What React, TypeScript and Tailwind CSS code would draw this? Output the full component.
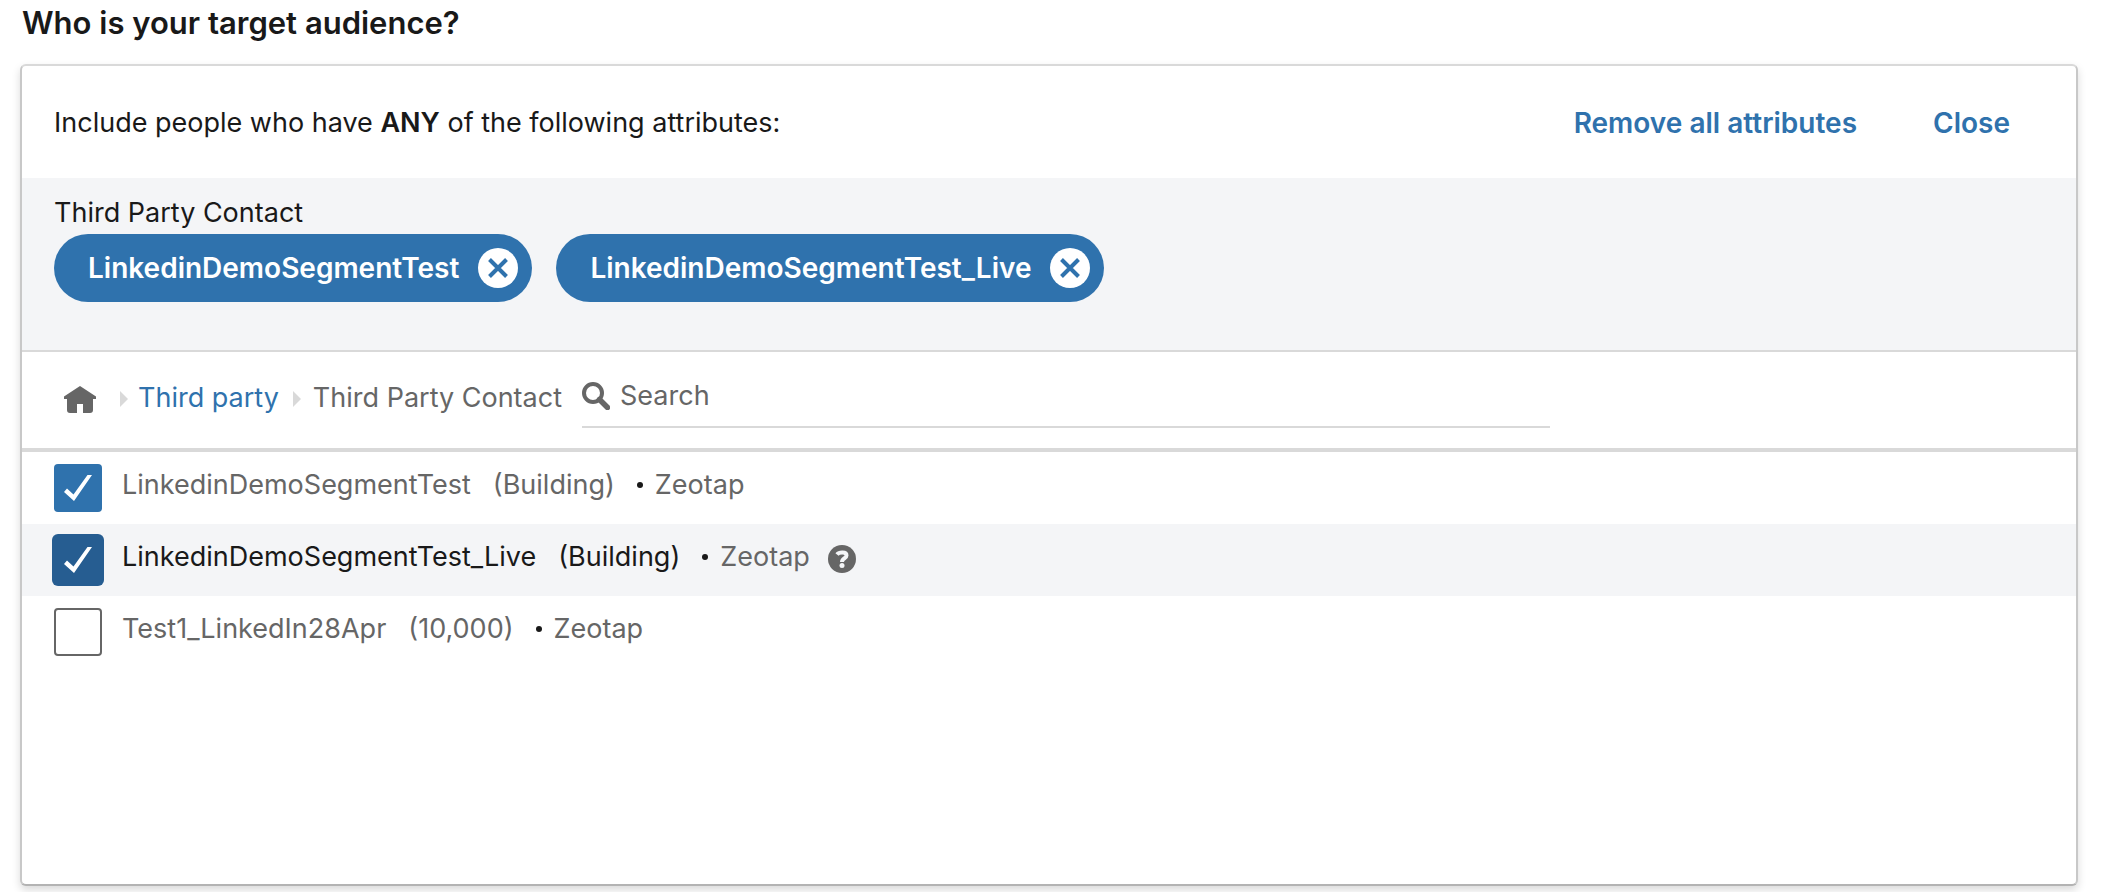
import { useState } from "react";

type Segment = {
  id: string;
  name: string;
  size: string;
  provider: string;
};

const SEGMENTS: Segment[] = [
  { id: "demo", name: "LinkedinDemoSegmentTest", size: "(Building)", provider: "Zeotap" },
  { id: "demo-live", name: "LinkedinDemoSegmentTest_Live", size: "(Building)", provider: "Zeotap" },
  { id: "test1", name: "Test1_LinkedIn28Apr", size: "(10,000)", provider: "Zeotap" },
];

export default function App() {
  const [selected, setSelected] = useState<string[]>(["demo", "demo-live"]);
  const [active, setActive] = useState("demo-live");
  const [query, setQuery] = useState("");

  function toggle(id: string) {
    setSelected((s) => (s.includes(id) ? s.filter((x) => x !== id) : [...s, id]));
  }

  const visible = SEGMENTS.filter((s) => s.name.toLowerCase().includes(query.toLowerCase()));

  return (
    <main className="flex min-h-screen flex-col bg-white pr-6 pb-1.5 pl-5 font-['Inter',sans-serif] text-[27px] leading-9 text-[#191919]">
      <h1 className="pt-[3px] pb-[21px] pl-0.5 text-[31px] leading-10 font-semibold">
        Who is your target audience?
      </h1>

      <section className="flex grow flex-col rounded-md border-2 border-[#c8c8c8] border-t-[#d9d9d9] border-b-[#b3b3b3] bg-white shadow-[0_4px_8px_rgba(0,0,0,0.15)]">
        {/* Header */}
        <div className="flex h-28 items-center justify-between pt-0.5 pr-[66px] pl-8">
          <p>
            Include people who have <strong className="font-semibold">ANY</strong> of the following
            attributes:
          </p>
          <div className="flex gap-19 text-[28px] font-semibold text-[#2f72ad]">
            <button onClick={() => setSelected([])}>Remove all attributes</button>
            <button>Close</button>
          </div>
        </div>

        {/* Selected attributes */}
        <div className="h-[174px] border-b-2 border-[#d9d9d9] bg-[#f4f5f7] px-8 pt-[17px]">
          <h2 className="mb-[3px]">Third Party Contact</h2>
          <div className="flex flex-wrap gap-6">
            {SEGMENTS.filter((s) => selected.includes(s.id)).map((s) => (
              <Chip key={s.id} label={s.name} onRemove={() => toggle(s.id)} />
            ))}
          </div>
        </div>

        {/* Breadcrumb + search */}
        <div className="flex h-25 border-b-4 border-[#d9d9d9] pl-10">
          <nav aria-label="Breadcrumb" className="flex h-23 items-center text-[#666]">
            <a href="#home" aria-label="Home" className="pt-1">
              <HomeIcon />
            </a>
            <Caret className="mt-0.5 mr-[10px] ml-6" />
            <a href="#third-party" className="text-[#2f72ad]">
              Third party
            </a>
            <Caret className="mt-0.5 mr-3 ml-3.5" />
            <span>Third Party Contact</span>
          </nav>
          <div className="mt-4 ml-5 flex h-15 w-[968px] items-start border-b-2 border-[#d9d9d9] pt-2.5">
            <SearchIcon />
            <input
              type="text"
              aria-label="Search"
              placeholder="Search"
              value={query}
              onChange={(e) => setQuery(e.target.value)}
              className="ml-2 h-9 min-w-0 grow px-0.5 outline-none placeholder:text-[#666]"
            />
          </div>
        </div>

        {/* Segments */}
        <ul>
          {visible.map((s) => (
            <SegmentRow
              key={s.id}
              segment={s}
              checked={selected.includes(s.id)}
              active={active === s.id}
              onHover={() => setActive(s.id)}
              onToggle={() => toggle(s.id)}
            />
          ))}
        </ul>
      </section>
    </main>
  );
}

function Chip({ label, onRemove }: { label: string; onRemove: () => void }) {
  return (
    <span className="flex h-17 items-center gap-[19px] rounded-full bg-[#2f72ad] pr-3.5 pl-[34px] text-[28px] font-semibold text-white">
      {label}
      <button aria-label={`Remove ${label}`} onClick={onRemove}>
        <svg viewBox="0 0 40 40" className="size-10">
          <circle cx="20" cy="20" r="20" fill="#fff" />
          <path d="M11.500 11.500 28.500 28.500M28.500 11.500 11.500 28.500" stroke="#2f72ad" strokeWidth="4" fill="none" />
        </svg>
      </button>
    </span>
  );
}

function SegmentRow({
  segment,
  checked,
  active,
  onHover,
  onToggle,
}: {
  segment: Segment;
  checked: boolean;
  active: boolean;
  onHover: () => void;
  onToggle: () => void;
}) {
  return (
    <li
      onMouseEnter={onHover}
      className={`flex h-18 items-center pl-[30px] ${active ? "bg-[#f4f5f7]" : "bg-white"}`}
    >
      <label className="flex items-center">
        <span className="grid size-13 place-items-center">
          <input
            type="checkbox"
            checked={checked}
            onChange={onToggle}
            className={`col-start-1 row-start-1 appearance-none ${active ? "size-13 rounded-md" : "size-12 rounded"} ${
              checked ? (active ? "bg-[#265d91]" : "bg-[#2f72ad]") : "border-2 border-[#666] bg-white"
            }`}
          />
          {checked && (
            <svg viewBox="0 0 28 26" className="pointer-events-none col-start-1 row-start-1 h-[26px] w-7 fill-white">
              <path d="M23.500 0H28L10 26 0 17 3 13.500 9.500 19.500z" />
            </svg>
          )}
        </span>
        <span className={`mb-1.5 ml-[18px] ${active ? "text-[#191919]" : "text-[#666]"}`}>
          {segment.name}
          <span className="ml-[22px]">{segment.size}</span>
        </span>
      </label>
      <span className="mb-1.5 ml-[22px] size-1.5 rounded-full bg-[#191919]" />
      <span className="mb-1.5 ml-3 text-[#666]">{segment.provider}</span>
      {active && (
        <button aria-label={`About ${segment.name}`} className="mb-0.5 ml-4.5">
          <HelpIcon />
        </button>
      )}
    </li>
  );
}

function Caret({ className }: { className: string }) {
  return (
    <svg viewBox="0 0 8 16" className={`h-4 w-2 fill-[#d9d9d9] ${className}`}>
      <path d="M0 0 8 8 0 16z" />
    </svg>
  );
}

function HomeIcon() {
  return (
    <svg viewBox="0 0 32 28" className="ml-0.5 h-7 w-8 fill-[#666]">
      <path d="M16 0 32 10.500V13H29V24a3 3 0 0 1-3 3H19V18H13V27H6a3 3 0 0 1-3-3V13H0V10.500z" />
    </svg>
  );
}

function SearchIcon() {
  return (
    <svg viewBox="0 0 28 28" fill="none" stroke="#666" className="mt-1 size-7 shrink-0">
      <circle cx="11" cy="11" r="9" strokeWidth="4" />
      <path d="M17.500 17.500 25.500 25.500" strokeWidth="5.500" strokeLinecap="round" />
    </svg>
  );
}

function HelpIcon() {
  return (
    <svg viewBox="0 0 28 28" fill="none" className="size-7">
      <circle cx="14" cy="14" r="14" fill="#666" />
      <path d="M9 9.500C11 7 18.500 6.500 18.500 10.500C18.500 13.500 14 13 14 17" stroke="#f4f5f7" strokeWidth="4" />
      <circle cx="14" cy="20.500" r="2.500" fill="#f4f5f7" />
    </svg>
  );
}
